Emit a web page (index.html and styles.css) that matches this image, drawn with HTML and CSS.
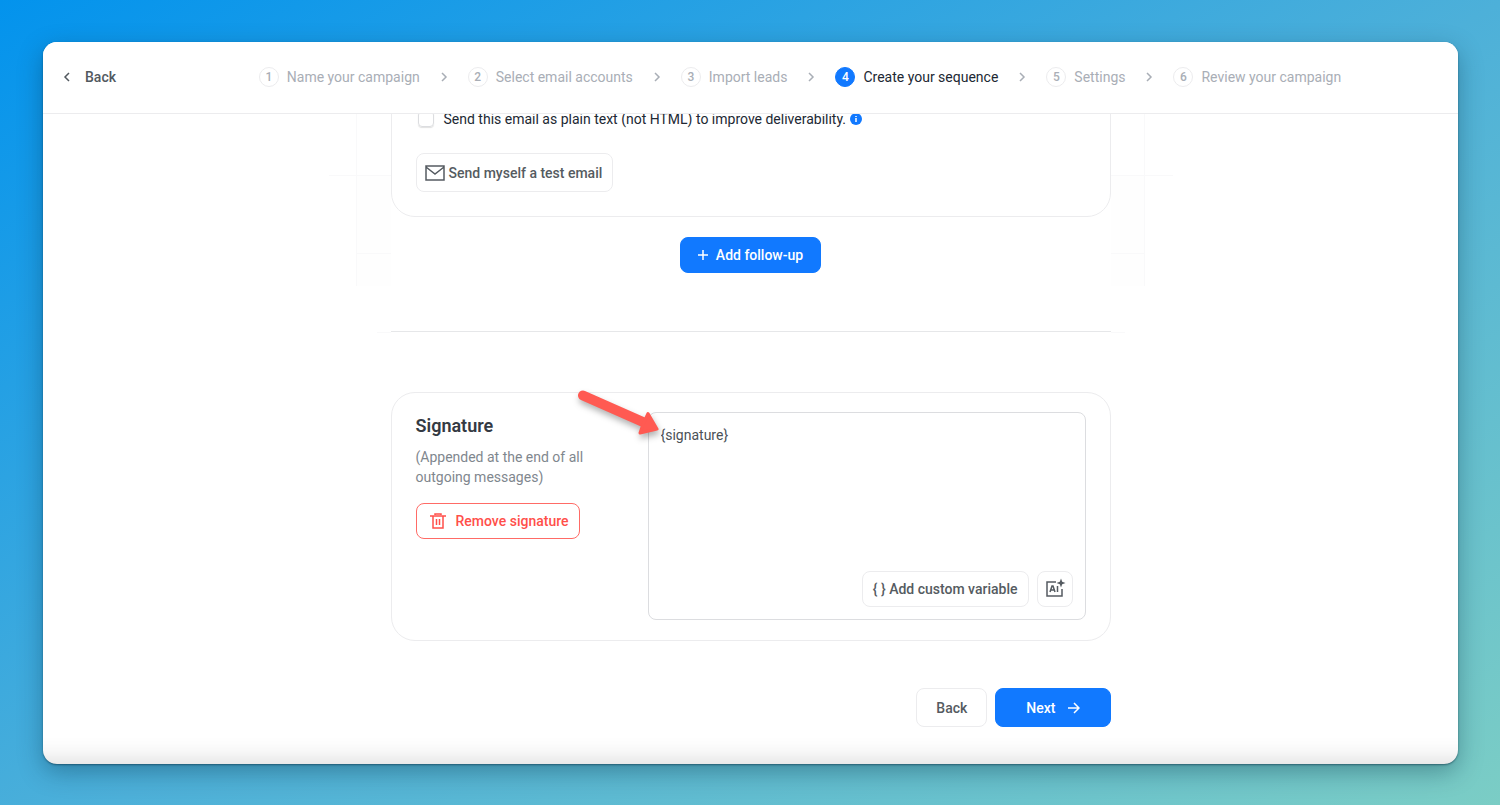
FILE: index.html
```html
<!DOCTYPE html>
<html lang="en">
<head>
    <meta charset="UTF-8">
    <meta name="viewport" content="width=device-width, initial-scale=1">
    <title>Create your sequence</title>
    <link rel="stylesheet" href="styles.css">
</head>
<body>
<div class="window">
    <header class="header">
        <a class="back" href="#">
            <svg width="8" height="12" viewBox="0 0 8 12"><path d="M6 2L2 6l4 4"/></svg>
            Back
        </a>
        <nav class="steps">
            <a class="step" href="#"><span class="num">1</span>Name your campaign</a>
            <svg class="chevron" width="12" height="12" viewBox="0 0 12 12"><path d="M4 2l4 4-4 4"/></svg>
            <a class="step" href="#"><span class="num">2</span>Select email accounts</a>
            <svg class="chevron" width="12" height="12" viewBox="0 0 12 12"><path d="M4 2l4 4-4 4"/></svg>
            <a class="step" href="#"><span class="num">3</span>Import leads</a>
            <svg class="chevron" width="12" height="12" viewBox="0 0 12 12"><path d="M4 2l4 4-4 4"/></svg>
            <a class="step current" href="#"><span class="num">4</span>Create your sequence</a>
            <svg class="chevron" width="12" height="12" viewBox="0 0 12 12"><path d="M4 2l4 4-4 4"/></svg>
            <a class="step" href="#"><span class="num">5</span>Settings</a>
            <svg class="chevron" width="12" height="12" viewBox="0 0 12 12"><path d="M4 2l4 4-4 4"/></svg>
            <a class="step" href="#"><span class="num">6</span>Review your campaign</a>
        </nav>
    </header>

    <main class="main">
        <!-- faint grid behind the cards -->
        <svg class="grid-lines" width="860" height="240" viewBox="0 0 860 240">
            <path class="cell" d="M36 62h34v110H36zM790 62h34v110h-34z"/>
            <path d="M35.500 0v172M823.500 0v172M8 61.500h62M790 61.500h62M36 139.500h34M790 139.500h34M56 218.500h14M790 218.500h14"/>
        </svg>

        <div class="content">
            <section class="card email">
                <div class="check">
                    <input type="checkbox" id="plain">
                    <label for="plain">Send this email as plain text (not HTML) to improve deliverability.</label>
                    <svg class="info" width="12" height="12" viewBox="0 0 12 12">
                        <circle cx="6" cy="6" r="6"/>
                        <path d="M6 5v4M6 3v1"/>
                    </svg>
                </div>
                <button class="btn test" type="button">
                    <svg width="20" height="16" viewBox="0 0 20 16"><path d="M1 1h18v14H1zM1 2l9 7 9-7"/></svg>
                    Send myself a test email
                </button>
            </section>

            <button class="btn primary follow" type="button">
                <svg width="10" height="10" viewBox="0 0 10 10"><path d="M5 0v10M0 5h10"/></svg>
                Add follow-up
            </button>

            <hr class="line">

            <section class="card signature">
                <div class="info-col">
                    <h2>Signature</h2>
                    <p>(Appended at the end of all outgoing messages)</p>
                    <button class="btn danger" type="button">
                        <svg width="16" height="16" viewBox="0 0 16 16">
                            <path d="M0 3h16M5 2V1h6v1M3 3v12h10V3"/>
                            <path d="M6.500 6v6M9.500 6v6"/>
                        </svg>
                        Remove signature
                    </button>
                </div>
                <div class="editor">
                    <textarea aria-label="Signature" spellcheck="false">{signature}</textarea>
                    <div class="tools">
                        <button class="btn" type="button">{ } Add custom variable</button>
                        <button class="btn ai" type="button" aria-label="Write with AI">
                            <svg width="20" height="20" viewBox="0 0 20 20">
                                <path d="M11 3H2v14h15v-7"/>
                                <path d="M5 13l2-6h1l2 6M6 11h4M12.500 7v6"/>
                                <path class="star" d="M16 -.500l1.200 3.300 3.300 1.200-3.300 1.200-1.200 3.300-1.200-3.300-3.300-1.200 3.300-1.200z"/>
                            </svg>
                        </button>
                    </div>
                </div>
                <svg class="arrow" width="96" height="64" viewBox="0 0 96 64">
                    <path d="M14 11.500L74 38" stroke="#ff5a52" stroke-width="10" stroke-linecap="round"/>
                    <path d="M79 29.500L88 45 71 49 73 43 76 36z" fill="#ff5a52" stroke="#ff5a52" stroke-width="3" stroke-linejoin="round"/>
                </svg>
            </section>

            <div class="actions">
                <button class="btn prev" type="button">Back</button>
                <button class="btn primary next" type="button">
                    Next
                    <svg width="12" height="12" viewBox="0 0 12 12"><path d="M0 6h11M6 1l5 5-5 5"/></svg>
                </button>
            </div>
        </div>
    </main>
</div>
</body>
</html>
```

FILE: styles.css
```css
* {
    margin: 0;
    padding: 0;
    box-sizing: border-box;
}

body {
    display: flex;
    min-height: 100vh;
    padding: 42px 42px 41px 43px;
    background: linear-gradient(150deg, #0393ed 0%, #4db0d9 52%, #7bcdc5 100%);
    font-family: Roboto, "Liberation Sans", sans-serif;
    font-size: 14px;
    line-height: 20px;
    color: #343a40;
}

a {
    color: inherit;
    text-decoration: none;
}

svg {
    flex: none;
    fill: none;
    stroke: currentColor;
}

.window {
    flex: 1;
    display: flex;
    flex-direction: column;
    overflow: hidden;
    background-color: #fff;
    border-radius: 14px;
    box-shadow: 0 8px 24px rgba(0, 40, 60, 0.35), 0 1px 2px rgba(0, 40, 60, 0.5);
}

.header {
    position: relative;
    z-index: 2;
    display: flex;
    align-items: center;
    height: 72px;
    padding: 0 20px 1px;
    background-color: #fff;
    border-bottom: 1px solid #ececee;
}

.back {
    display: flex;
    align-items: center;
    gap: 14px;
    font-weight: 500;
    color: #52595f;
}

.back svg,
.chevron {
    stroke-width: 1.5;
}

.steps {
    flex: 1;
    display: flex;
    align-items: center;
    justify-content: center;
    gap: 18px;
    padding-left: 46px;
    color: #a9aeb6;
}

.step {
    display: flex;
    align-items: center;
    gap: 8px;
    white-space: nowrap;
}

.num {
    width: 20px;
    height: 20px;
    border: 1px solid #ececee;
    border-radius: 50%;
    font-size: 12px;
    font-weight: 500;
    line-height: 18px;
    text-align: center;
}

.current {
    color: #212833;
}

.current .num {
    background-color: #1179ff;
    border-color: #1179ff;
    color: #fff;
}

.main {
    flex: 1;
    position: relative;
    box-shadow: inset 0 -36px 24px -32px rgba(0, 0, 0, 0.14);
}

.grid-lines {
    position: absolute;
    top: 0;
    left: 50%;
    margin-left: -430px;
    stroke: #f9f9fa;
}

.grid-lines .cell {
    fill: #fefefe;
    stroke: none;
}

.content {
    position: relative;
    display: flex;
    flex-direction: column;
    max-width: 720px;
    margin: 0 auto;
}

.card {
    padding: 24px;
    background-color: #fff;
    border: 1px solid #ececee;
    border-radius: 24px;
}

/* scrolled up under the header */
.email {
    margin-top: -30px;
}

.check {
    display: flex;
    align-items: center;
    margin-bottom: 24px;
    color: #212833;
}

.check input {
    appearance: none;
    width: 16px;
    height: 16px;
    margin: 0 10px 0 2px;
    border: 1px solid #dcdde0;
    border-radius: 4px;
    box-shadow: 0 1px 1px rgba(0, 0, 0, 0.12);
}

.info {
    margin-left: 4px;
    fill: #1179ff;
    stroke: none;
}

.info path {
    stroke: #fff;
    stroke-width: 1.5;
}

.btn {
    display: flex;
    align-items: center;
    justify-content: center;
    height: 36px;
    padding: 0 10px;
    background-color: #fff;
    border: 1px solid #ececee;
    border-radius: 8px;
    font-family: inherit;
    font-size: 14px;
    font-weight: 500;
    color: #555b61;
    white-space: nowrap;
    cursor: pointer;
}

.test {
    gap: 4px;
    height: 39px;
    padding: 0 10px 0 8px;
}

.test svg {
    stroke-width: 1.5;
}

.primary {
    background-color: #1179ff;
    border-color: #1179ff;
    color: #fff;
}

.primary svg {
    stroke-width: 1.5;
}

.follow {
    align-self: center;
    gap: 8px;
    margin-top: 20px;
    padding: 0 17px;
}

.line {
    margin: 58px 0 60px;
    border: 0;
    border-top: 1px solid #e6e7e9;
}

.signature {
    position: relative;
    display: flex;
    justify-content: space-between;
    gap: 24px;
    padding: 19px 24px 20px;
}

.info-col {
    flex: 0 1 180px;
}

h2 {
    margin: 4px 0 11px;
    font-size: 18px;
    font-weight: 600;
    line-height: 20px;
    color: #343a43;
}

p {
    margin-bottom: 16px;
    color: #7f878e;
}

.danger {
    gap: 10px;
    padding: 0 10px 0 13px;
    border-color: #ff6b66;
    color: #ff4f4a;
}

.danger svg {
    stroke-width: 1.5;
}

.editor {
    flex: 0 1 438px;
    display: flex;
    flex-direction: column;
    padding: 12px;
    border: 1px solid #dcdde0;
    border-radius: 8px;
}

textarea {
    height: 146px;
    border: 0;
    outline: 0;
    resize: none;
    background: none;
    font: inherit;
    color: #4b5157;
}

.tools {
    display: flex;
    justify-content: flex-end;
    gap: 8px;
}

.ai {
    width: 36px;
    padding: 0;
}

.ai svg {
    overflow: visible;
    stroke-width: 1.5;
}

.ai .star {
    fill: currentColor;
    stroke: none;
}

.arrow {
    position: absolute;
    top: -9px;
    left: 177px;
    filter: drop-shadow(1px 4px 3px rgba(0, 0, 0, 0.3));
}

.actions {
    display: flex;
    justify-content: flex-end;
    gap: 8px;
    padding: 47px 0 36px;
}

.prev,
.next {
    height: 39px;
    padding: 0 19px;
}

.next {
    gap: 12px;
    padding: 0 30px;
}
```
